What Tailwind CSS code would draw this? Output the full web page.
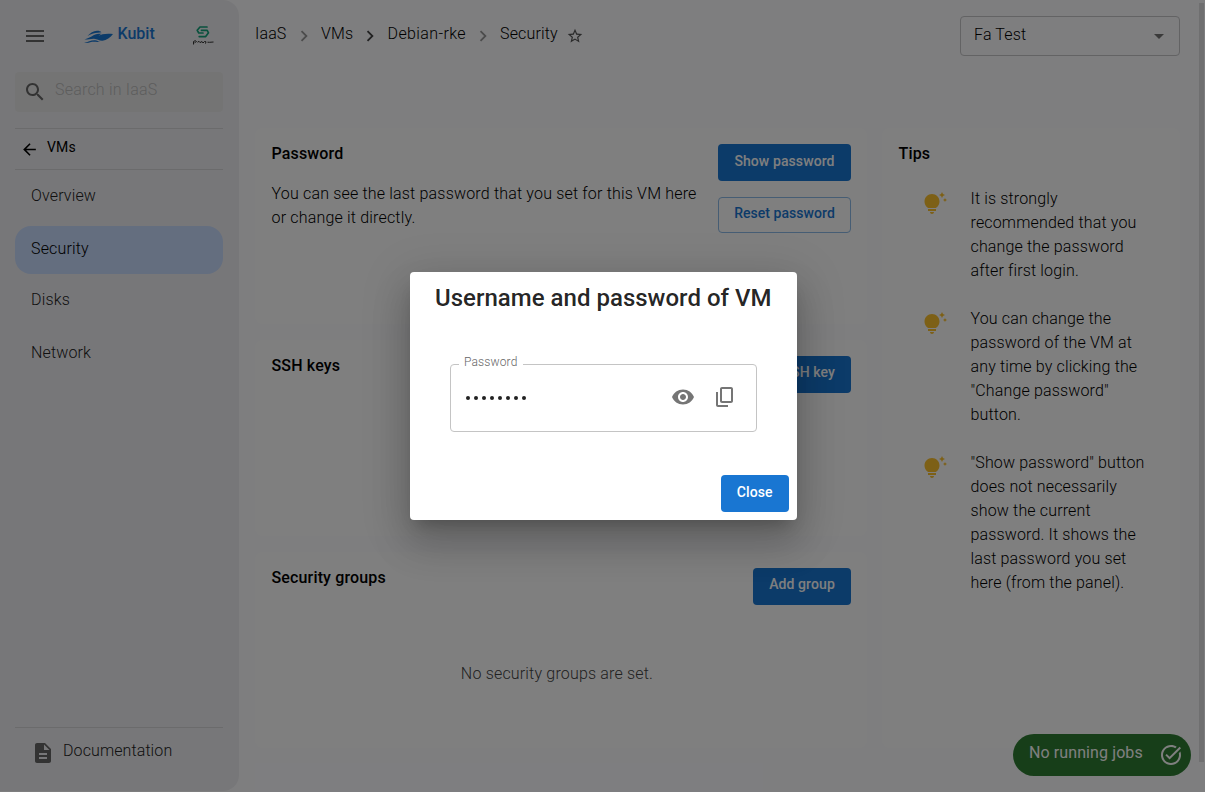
<!DOCTYPE html>
<html lang="en">
<head>
<meta charset="utf-8">
<title>Kubit - Security</title>
<script src="https://cdn.jsdelivr.net/npm/@tailwindcss/browser@4"></script>
</head>
<body class="h-[792px] w-[1205px] overflow-hidden bg-[#fcfcff] font-['Roboto',sans-serif] text-base font-light leading-6 tracking-[0.15px] text-black">
<svg class="hidden">
  <symbol id="bulb" viewBox="0 0 24 24"><path d="M7 20h4c0 1.100-.9 2-2 2s-2-.9-2-2zm-2-1h8v-2H5v2zm11.500-9.500c0 3.820-2.660 5.860-3.770 6.500H5.270C4.160 15.360 1.500 13.320 1.500 9.500 1.500 5.360 4.860 2 9 2s7.500 3.360 7.500 7.500zm4.870-2.130L20 8l1.370.63L22 10l.63-1.370L24 8l-1.370-.63L22 6l-.63 1.370zM19 6l.94-2.060L22 3l-2.060-.94L19 0l-.94 2.060L16 3l2.060.94L19 6z"/></symbol>
  <symbol id="chev" viewBox="0 0 24 24"><path d="M10 6 8.590 7.410 13.170 12l-4.580 4.590L10 18l6-6z"/></symbol>
</svg>

<div class="flex h-full">
  <aside class="flex h-[791px] w-[239px] flex-col rounded-r-2xl bg-[#efeff2] pl-[15px] pr-4">
    <div class="flex h-[72px] items-center">
      <svg class="ml-2 size-6 fill-[#666]" viewBox="0 0 24 24"><path d="M3 18h18v-2H3v2zm0-5h18v-2H3v2zm0-7v2h18V6H3z"/></svg>
      <div class="ml-[36px] flex items-center">
        <svg class="mt-0.5 h-[14px] w-[30px] fill-[#1976d2]" viewBox="0 0 30 14"><path d="M4.500 6C7 3 10.500 1 14 .8 16 .7 17.300 1.200 18.500 2.300L15 2.800C11 3 7.500 4.300 4.500 6z"/><path d="M1.500 9.600C5 8.300 8 6.700 10.500 5.200 13 3.900 16 3.600 18.500 3.700L15.500 5.800 19.500 4.200C22.500 3.600 26.500 3.500 30 4 27.500 7.500 23.500 10.300 19.500 10.800 16 11 14.500 9 11 8.800 7.500 8.700 4.500 9.800 1.500 9.600z"/><path d="M1 12.600C5 12.300 8 10 12 10.200 14 10.300 15.500 11.500 17.500 11.600 14 12.500 11 11.300 8 12.100 5.500 12.900 3 13.500 1 12.600z"/></svg>
        <span class="-mt-1 ml-[4.500px] font-medium tracking-normal text-[#1976d2]">Kubit</span>
      </div>
      <svg class="ml-[37px] h-[20px] w-[22px] fill-none" viewBox="0 0 22 20"><g stroke="#12a37b" stroke-width="1.700" stroke-linejoin="round" stroke-linecap="round"><path d="M15 1H8L5.200 4.300 6.800 7H11"/><path d="M9.500 4.400H15.200L16.500 6.800 13.700 10.600H7.200"/></g><path d="M1.500 18.500V15.500Q3.500 13.800 4.500 15.500L2.500 16.800M5.500 16.300 7 15.300 8 16.600 10 15.500 11 17 12.500 15.500 14 15.800 13.500 17.600M15.500 16.200 17.500 16.300 21.500 16" stroke="#333"/></svg>
    </div>
    <div class="flex h-10 items-center rounded bg-[#e9e9e9]">
      <svg class="ml-2 size-6 fill-[#666]" viewBox="0 0 24 24"><path d="M15.500 14h-.79l-.28-.27C15.410 12.590 16 11.110 16 9.500 16 5.910 13.090 3 9.500 3S3 5.910 3 9.500 5.910 16 9.500 16c1.610 0 3.090-.59 4.230-1.570l.27.28v.79l5 4.990L20.490 19l-4.990-5zm-6 0C7.010 14 5 11.990 5 9.500S7.010 5 9.500 5 14 7.010 14 9.500 11.990 14 9.500 14z"/></svg>
      <span class="-mt-1 ml-2 tracking-[0.2px] text-[#bbb]">Search in IaaS</span>
    </div>
    <div class="mt-4 flex h-[42px] items-center border-y border-[#d6d6d9] pl-[5px]">
      <svg class="size-[19px]" viewBox="0 0 24 24"><path d="M20 11H7.830l5.590-5.590L12 4l-8 8 8 8 1.410-1.410L7.830 13H20v-2z"/></svg>
      <span class="-mt-1 ml-2 text-sm font-normal">VMs</span>
    </div>
    <nav class="mt-1 flex flex-col gap-1 text-[#222]">
      <a class="flex h-12 items-center pl-4 pb-1">Overview</a>
      <a class="flex h-12 items-center rounded-2xl bg-[#c8dcff] pl-4 pb-0.5 text-black">Security</a>
      <a class="flex h-12 items-center pl-4 pb-1">Disks</a>
      <a class="flex h-12 items-center pl-4 pb-0.5">Network</a>
    </nav>
    <div class="mt-auto flex h-16 items-start border-t border-[#d6d6d9] pl-4 pt-[13px] text-[#222]">
      <svg class="size-6 fill-[#666]" viewBox="0 0 24 24"><path d="M14 2H6c-1.100 0-1.990.9-1.990 2L4 20c0 1.100.89 2 1.990 2H18c1.100 0 2-.9 2-2V8l-6-6zm2 16H8v-2h8v2zm0-4H8v-2h8v2zm-3-5V3.500L18.500 9H13z"/></svg>
      <span class="-mt-0.5 ml-2 tracking-[0.1px]">Documentation</span>
    </div>
  </aside>

  <main class="w-[960px] pl-4">
    <header class="flex h-32 justify-between pr-[19px]">
      <div class="flex h-12 items-start whitespace-nowrap pt-[22px]">
        <span class="w-8">IaaS</span>
        <svg class="ml-[6px] mt-[3px] size-[22px] fill-[#999]"><use href="#chev"/></svg>
        <span class="ml-[6px] w-[33px]">VMs</span>
        <svg class="ml-[5px] mt-[3px] size-[22px] fill-[#444]"><use href="#chev"/></svg>
        <span class="ml-[6px] w-[79px] pl-[0.5px] tracking-[0.4px]">Debian-rke</span>
        <svg class="ml-[6px] mt-[3px] size-[22px] fill-[#999]"><use href="#chev"/></svg>
        <span class="ml-[6px] w-[58px]">Security</span>
        <svg class="ml-[9px] mt-[6px] size-4 fill-[#555]" viewBox="1 1 22 22"><path d="m22 9.240-7.190-.62L12 2 9.190 8.630 2 9.240l5.460 4.730L5.820 21 12 17.270 18.180 21l-1.630-7.030L22 9.240zM12 15.400l-3.760 2.270 1-4.280-3.320-2.880 4.380-.38L12 6.100l1.710 4.040 4.380.38-3.320 2.880 1 4.280L12 15.400z"/></svg>
      </div>
      <div class="mt-4 flex h-10 w-[220px] items-center justify-between rounded border border-[#c6c6c8] pl-[13px] pr-2">
        <span class="-mt-0.5">Fa Test</span>
        <svg class="size-6 fill-[#757575]" viewBox="0 0 24 24"><path d="m7 10 5 5 5-5z"/></svg>
      </div>
    </header>
    <div class="flex gap-[15px]">
      <div class="flex w-[612px] flex-col gap-4">
        <section class="flex h-[196px] justify-between rounded-lg bg-white p-4">
          <div class="-mt-0.5 w-[432px] pl-[0.5px]">
            <h2 class="font-medium">Password</h2>
            <p class="mt-4 tracking-[0.18px]">You can see the last password that you set for this VM here or change it directly.</p>
          </div>
          <div class="flex w-[133px] flex-col gap-4 text-sm leading-6 tracking-[0.1px]">
            <button class="h-[36.500px] rounded bg-[#1976d2] pb-[3px] font-medium text-white">Show password</button>
            <button class="h-[36.500px] rounded border border-[#8cbae8] pb-1 font-medium tracking-[0.05px] text-[#1976d2]">Reset password</button>
          </div>
        </section>
        <section class="flex h-[196px] justify-between rounded-lg bg-white p-4">
          <h2 class="-mt-0.5 pl-[0.5px] font-medium">SSH keys</h2>
          <button class="h-[36.500px] rounded bg-[#1976d2] px-4 pb-[5px] text-sm font-medium tracking-[0.1px] text-white">Add SSH key</button>
        </section>
        <section class="h-[196px] rounded-lg bg-white p-4">
          <div class="flex justify-between">
            <h2 class="-mt-0.5 pl-[0.5px] font-medium">Security groups</h2>
            <button class="h-[36.500px] w-[98px] rounded bg-[#1976d2] pb-[5px] text-sm font-medium tracking-[0.1px] text-white">Add group</button>
          </div>
          <p class="mt-[57.500px] pr-[8px] text-center tracking-[0.18px] text-[#444]">No security groups are set.</p>
        </section>
      </div>
      <section class="h-[620px] w-[298px] rounded-lg bg-white pl-[16.500px] pr-4 pt-3.5">
        <h2 class="font-medium">Tips</h2>
        <ul class="mt-[21px] flex flex-col gap-6 pl-6">
          <li class="flex gap-6"><svg class="mt-[5px] size-6 shrink-0 fill-[#fbc02d]"><use href="#bulb"/></svg><p class="w-[178px]">It is strongly recommended that you change the password after first login.</p></li>
          <li class="flex gap-6"><svg class="mt-[5px] size-6 shrink-0 fill-[#fbc02d]"><use href="#bulb"/></svg><p class="w-[178px]">You can change the password of the VM at any time by clicking the "Change password" button.</p></li>
          <li class="flex gap-6"><svg class="mt-[5px] size-6 shrink-0 fill-[#fbc02d]"><use href="#bulb"/></svg><p class="w-[178px]">"Show password" button does not necessarily show the current password. It shows the last password you set here (from the panel).</p></li>
        </ul>
      </section>
    </div>
  </main>
  <div class="mt-[3px] h-[759px] w-[5px] bg-[#dfdfe1]"></div>
</div>

<div class="absolute left-[1013px] top-[734px] flex h-[42px] w-[178px] items-center justify-between rounded-full bg-[#2e7d32] pl-4 pr-2 font-normal text-white">
  <span class="-mt-1 tracking-[0.1px]">No running jobs</span>
  <svg class="size-6 fill-white" viewBox="0 0 24 24"><path d="M22 5.180 10.590 16.600l-4.240-4.240 1.410-1.410 2.830 2.830 10-10L22 5.180zm-2.210 5.040c.13.570.21 1.170.21 1.780 0 4.420-3.580 8-8 8s-8-3.580-8-8 3.580-8 8-8c1.580 0 3.040.46 4.280 1.250l1.440-1.440C16.100 2.670 14.130 2 12 2 6.480 2 2 6.480 2 12s4.480 10 10 10 10-4.480 10-10c0-1.190-.22-2.330-.6-3.390l-1.610 1.610z"/></svg>
</div>

<div class="absolute inset-0 bg-black/50"></div>
<div class="absolute left-[410px] top-[272px] flex h-[247.500px] w-[386.500px] flex-col rounded bg-white shadow-[0_11px_15px_-7px_rgba(0,0,0,0.2),0_24px_38px_3px_rgba(0,0,0,0.14),0_9px_46px_8px_rgba(0,0,0,0.12)]">
  <h1 class="mt-2.5 text-center text-2xl font-medium tracking-[0.02px] text-black/87">Username and password of VM</h1>
  <div class="relative ml-10 mt-[50px] flex h-[68px] w-[306.500px] items-center rounded border border-[#c4c4c4] pl-[15px]">
    <span class="absolute -top-[13px] left-2 bg-white px-[5px] text-xs leading-5 tracking-[0.15px] text-[#666]">Password</span>
    <span class="flex gap-1"><i class="size-1 rounded-full bg-[#222]"></i><i class="size-1 rounded-full bg-[#222]"></i><i class="size-1 rounded-full bg-[#222]"></i><i class="size-1 rounded-full bg-[#222]"></i><i class="size-1 rounded-full bg-[#222]"></i><i class="size-1 rounded-full bg-[#222]"></i><i class="size-1 rounded-full bg-[#222]"></i><i class="size-1 rounded-full bg-[#222]"></i></span>
    <svg class="mb-0.5 ml-auto size-6 fill-[#757575]" viewBox="0 0 24 24"><path d="M12 4.500C7 4.500 2.730 7.610 1 12c1.730 4.390 6 7.500 11 7.500s9.270-3.110 11-7.500c-1.730-4.390-6-7.500-11-7.500zM12 17c-2.760 0-5-2.240-5-5s2.240-5 5-5 5 2.240 5 5-2.240 5-5 5zm0-8c-1.660 0-3 1.340-3 3s1.340 3 3 3 3-1.340 3-3-1.340-3-3-3z"/></svg>
    <svg class="mb-0.5 ml-[18px] mr-[19px] size-6 fill-[#757575]" viewBox="0 0 24 24"><path d="M18 2H9c-1.100 0-2 .9-2 2v12c0 1.100.9 2 2 2h9c1.100 0 2-.9 2-2V4c0-1.100-.9-2-2-2zm0 14H9V4h9v12zM3 15V7h2v13h10v2H5c-1.100 0-2-.9-2-2z"/></svg>
  </div>
  <button class="mb-2 ml-auto mr-2 mt-auto h-[36.500px] w-[67.500px] rounded bg-[#1976d2] pb-[3px] text-sm font-medium tracking-[0.1px] text-white">Close</button>
</div>
</body>
</html>
